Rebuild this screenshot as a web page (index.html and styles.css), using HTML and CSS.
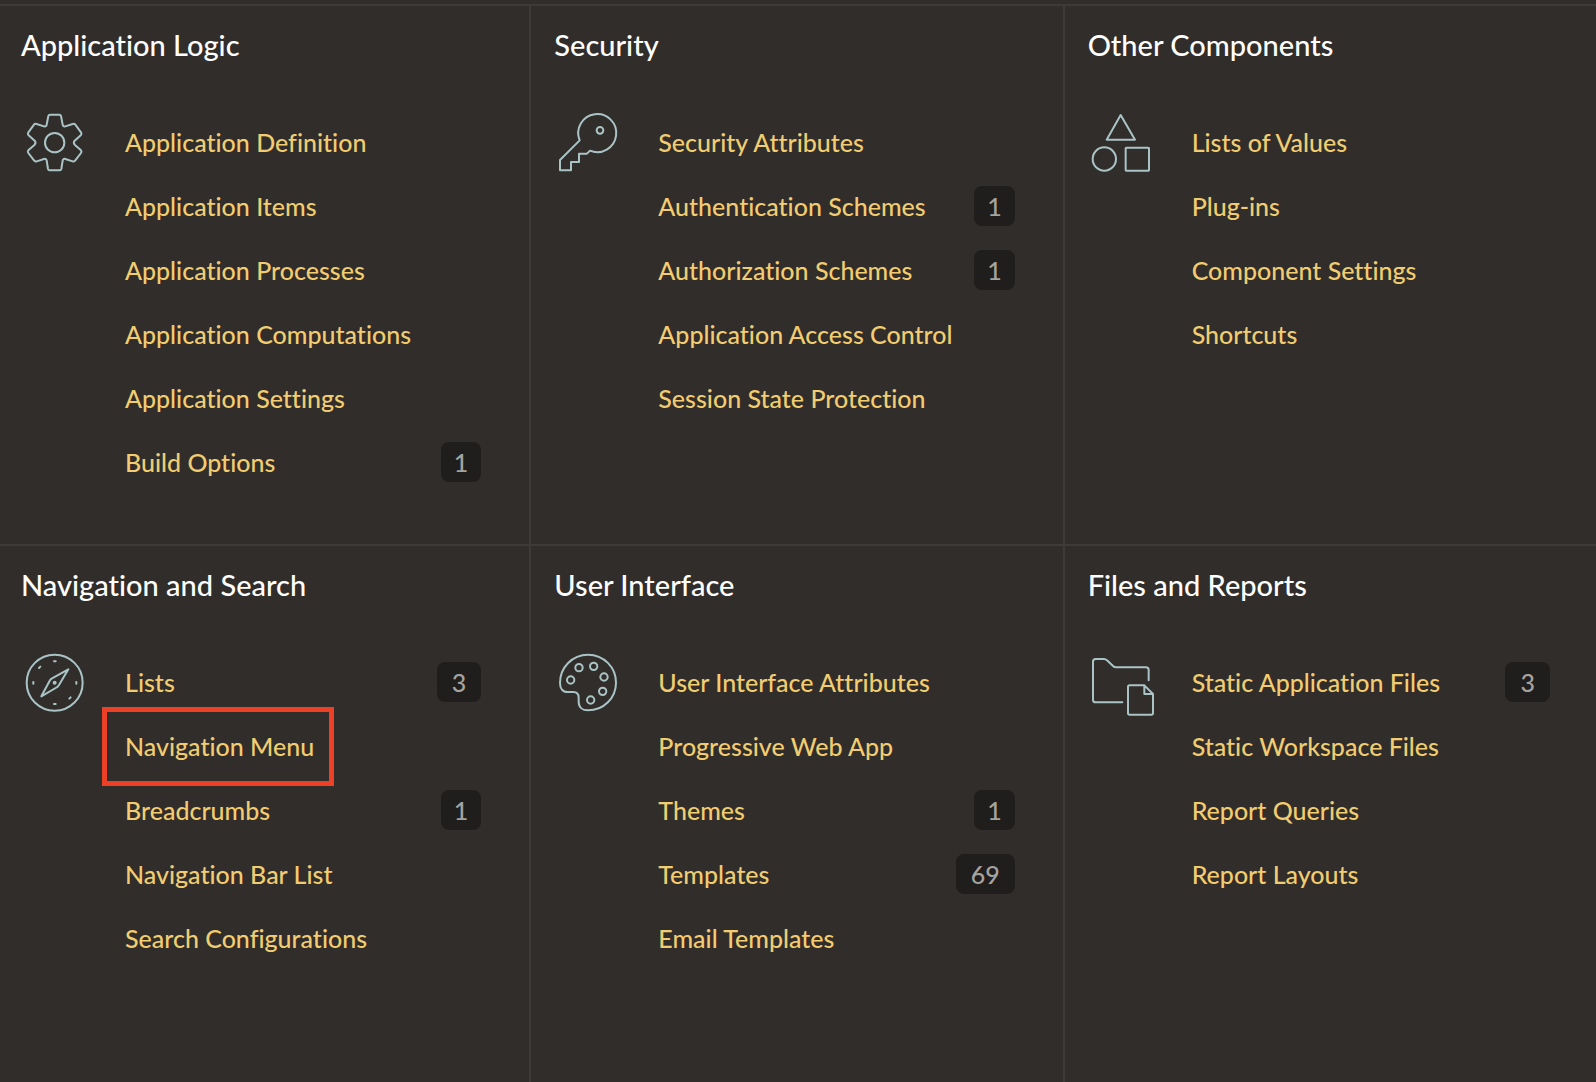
FILE: index.html
```html
<!DOCTYPE html>
<html lang="en">
<head>
<meta charset="utf-8">
<meta name="viewport" content="width=device-width, initial-scale=1">
<title>Shared Components</title>
<link rel="stylesheet" href="styles.css">
</head>
<body>
<main class="components">
  <section class="group">
    <h2 class="group-title">Application Logic</h2>
    <div class="group-body">
      <svg class="group-icon" viewBox="39 33 192 192" aria-hidden="true">
        <path d="M120 44H148Q152 44 153 48L158 74Q159 81 166 79L188 72Q193 70 196 74L213 97Q216 101 213 105L194 122Q189 128 194 134L213 151Q216 155 213 159L196 181Q193 186 188 184L166 177Q159 175 158 182L154 207Q153 211 149 211H119Q115 211 114 207L110 182Q109 175 102 177L80 184Q75 186 72 181L55 159Q52 155 55 151L74 134Q79 128 74 122L55 105Q52 101 55 97L72 74Q75 70 80 72L102 79Q109 81 110 74L115 48Q116 44 120 44Z"/>
        <circle cx="134" cy="128" r="29"/>
      </svg>
      <ul class="links">
        <li><a href="#">Application Definition</a></li>
        <li><a href="#">Application Items</a></li>
        <li><a href="#">Application Processes</a></li>
        <li><a href="#">Application Computations</a></li>
        <li><a href="#">Application Settings</a></li>
        <li><a href="#">Build Options</a><span class="badge badge-one">1</span></li>
      </ul>
    </div>
  </section>

  <section class="group">
    <h2 class="group-title">Security</h2>
    <div class="group-body">
      <svg class="group-icon" viewBox="33 33 192 192" aria-hidden="true">
        <path d="M104 121A57 57 0 1 1 135 152L126 161H102V186H78V211H45V180Z"/>
        <circle cx="165" cy="91" r="10"/>
      </svg>
      <ul class="links">
        <li><a href="#">Security Attributes</a></li>
        <li><a href="#">Authentication Schemes</a><span class="badge badge-one">1</span></li>
        <li><a href="#">Authorization Schemes</a><span class="badge badge-one">1</span></li>
        <li><a href="#">Application Access Control</a></li>
        <li><a href="#">Session State Protection</a></li>
      </ul>
    </div>
  </section>

  <section class="group">
    <h2 class="group-title">Other Components</h2>
    <div class="group-body">
      <svg class="group-icon" viewBox="30 33 192 192" aria-hidden="true">
        <path d="M122 45L165 119H80Z"/>
        <circle cx="73" cy="177" r="35"/>
        <rect x="137" y="143" width="70" height="69" rx="2"/>
      </svg>
      <ul class="links">
        <li><a href="#">Lists of Values</a></li>
        <li><a href="#">Plug-ins</a></li>
        <li><a href="#">Component Settings</a></li>
        <li><a href="#">Shortcuts</a></li>
      </ul>
    </div>
  </section>

  <section class="group">
    <h2 class="group-title">Navigation and Search</h2>
    <div class="group-body">
      <svg class="group-icon" viewBox="39 33 192 192" aria-hidden="true">
        <circle cx="134" cy="128" r="84"/>
        <path d="M175 88L147 135Q145 138 142 141L94 169L120 121Q122 117 126 115Z"/>
        <path class="ticks" d="M132 64H137M132 192H137M70 126V131M199 126V131M87 84L91 80M178 176L182 172"/>
        <circle class="dot" cx="134" cy="128" r="6"/>
      </svg>
      <ul class="links">
        <li><a href="#">Lists</a><span class="badge">3</span></li>
        <li><a class="highlighted" href="#">Navigation Menu</a></li>
        <li><a href="#">Breadcrumbs</a><span class="badge badge-one">1</span></li>
        <li><a href="#">Navigation Bar List</a></li>
        <li><a href="#">Search Configurations</a></li>
      </ul>
    </div>
  </section>

  <section class="group">
    <h2 class="group-title">User Interface</h2>
    <div class="group-body">
      <svg class="group-icon" viewBox="33 33 192 192" aria-hidden="true">
        <path d="M129 44C176 44 213 82 213 128C213 174 176 211 129 211C112 211 101 201 101 185V173C101 162 95 156 85 156H68C53 156 45 145 45 129C45 82 82 44 129 44Z"/>
        <circle cx="77" cy="120" r="11"/>
        <circle cx="102" cy="83" r="11"/>
        <circle cx="146" cy="79" r="11"/>
        <circle cx="177" cy="111" r="11"/>
        <circle cx="173" cy="154" r="11"/>
        <circle cx="137" cy="180" r="11"/>
      </svg>
      <ul class="links">
        <li><a href="#">User Interface Attributes</a></li>
        <li><a href="#">Progressive Web App</a></li>
        <li><a href="#">Themes</a><span class="badge badge-one">1</span></li>
        <li><a href="#">Templates</a><span class="badge">69</span></li>
        <li><a href="#">Email Templates</a></li>
      </ul>
    </div>
  </section>

  <section class="group">
    <h2 class="group-title">Files and Reports</h2>
    <div class="group-body">
      <svg class="group-icon" viewBox="30 33 192 192" aria-hidden="true">
        <path d="M127 187H47Q39 187 39 179V65Q39 57 47 57H72Q77 57 81 61L99 78Q103 82 108 82H198Q206 82 206 90V121"/>
        <path d="M149 136H193L219 162V219Q219 224 214 224H149Q144 224 144 219V141Q144 136 149 136ZM193 136V162H219"/>
      </svg>
      <ul class="links">
        <li><a href="#">Static Application Files</a><span class="badge">3</span></li>
        <li><a href="#">Static Workspace Files</a></li>
        <li><a href="#">Report Queries</a></li>
        <li><a href="#">Report Layouts</a></li>
      </ul>
    </div>
  </section>
</main>
</body>
</html>
```
FILE: styles.css
```css
:root {
  --page: #312d2a;
  --line: #3e3a37;
  --link: #f1cc71;
  --icon: #aac4c6;
  --badge: #201e1c;
  --badge-text: #a5a3a0;
  --mark: #ec4126;
}

* {
  box-sizing: border-box;
}

body {
  display: flex;
  min-height: 100vh;
  margin: 0;
  padding-top: 4px;
  overflow-x: hidden;
  background: var(--page);
  color: #fff;
  font-family: Lato, "Noto Sans", sans-serif;
  font-weight: 500;
  font-variant-ligatures: none;
}

.components {
  flex: 1;
  display: grid;
  grid-template-columns: repeat(3, 1fr);
  grid-template-rows: 540px auto;
  margin: 0 -2px;
}

.group {
  padding: 20px 48px 24px 23px;
  border-top: 2px solid var(--line);
  border-right: 2px solid var(--line);
}

.group:nth-child(3n) {
  border-right: 0;
}

.group-title {
  margin: 0 0 46px;
  font-size: 29px;
  font-weight: 500;
  line-height: 38px;
}

.group-body {
  display: grid;
  grid-template-columns: 66px 1fr;
  column-gap: 38px;
  align-items: start;
}

.group-icon {
  width: 64px;
  height: 64px;
  margin: 1px 0 0 2px;
  overflow: visible;
  fill: none;
  stroke: var(--icon);
  stroke-width: 6;
  stroke-linejoin: round;
  stroke-linecap: round;
}

.dot {
  fill: var(--icon);
  stroke: none;
}

.ticks {
  stroke-width: 6;
}

.links {
  margin: 0;
  padding: 0;
  list-style: none;
}

.links li {
  display: flex;
  align-items: center;
  justify-content: space-between;
  height: 64px;
}

.links a {
  color: var(--link);
  font-size: 25px;
  line-height: 32px;
  text-decoration: none;
  white-space: nowrap;
}

.links a:hover {
  text-decoration: underline;
}

.highlighted {
  position: relative;
}

.highlighted::after {
  content: "";
  position: absolute;
  inset: -23px -20px -24px -23px;
  border: 5px solid var(--mark);
}

.badge {
  padding: 0 15px;
  border-radius: 8px;
  background: var(--badge);
  color: var(--badge-text);
  font-size: 25px;
  line-height: 40px;
}

.badge-one {
  padding: 0 13px;
}
```
